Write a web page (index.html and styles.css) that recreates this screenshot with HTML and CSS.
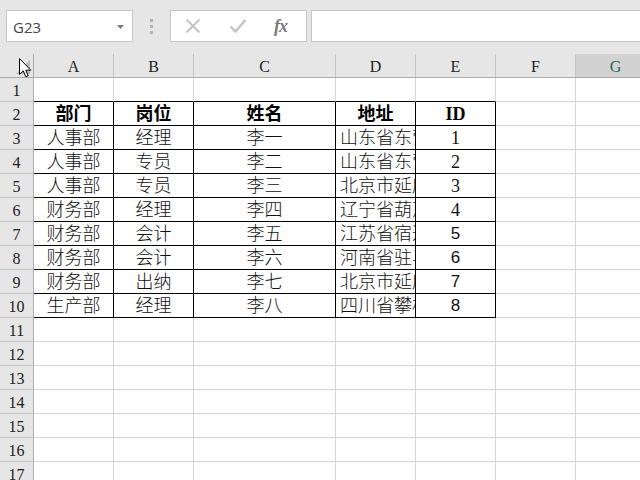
FILE: index.html
```html
<!DOCTYPE html>
<html lang="zh-CN">
<head>
<meta charset="utf-8">
<title>Sheet</title>
<link rel="stylesheet" href="styles.css">
</head>
<body>
<div class="app">
  <div class="toolbar">
    <div class="namebox">
      <span class="namebox-text">G23</span>
      <svg class="dd" width="7" height="4" viewBox="0 0 7 4"><path d="M0 0H7L3.5 4Z" fill="#7a7a7a"/></svg>
    </div>
    <div class="grip"><i></i><i></i><i></i></div>
    <div class="fbtns">
      <svg class="ico" width="16" height="16" viewBox="0 0 16 16"><path d="M1.5 1.5L14.5 14.5M14.5 1.5L1.5 14.5" stroke="#c2c2c2" stroke-width="1.8" fill="none"/></svg>
      <svg class="ico" width="18" height="16" viewBox="0 0 18 16"><path d="M1.5 8.5L6.5 13.5L16.5 2" stroke="#c2c2c2" stroke-width="2.4" fill="none"/></svg>
      <span class="fx">fx</span>
    </div>
    <div class="finput"></div>
  </div>

  <div class="sheet">
    <div class="corner"><span class="tri"></span></div>
    <div class="ch">A</div><div class="ch">B</div><div class="ch">C</div><div class="ch">D</div><div class="ch">E</div><div class="ch">F</div><div class="ch sel">G</div>

    <div class="rh">1</div><div class="c tb"></div><div class="c tb"></div><div class="c tb"></div><div class="c tb"></div><div class="c tb"></div><div class="c"></div><div class="c"></div>

    <div class="rh">2</div><div class="c t hd">部门</div><div class="c t hd">岗位</div><div class="c t hd">姓名</div><div class="c t hd">地址</div><div class="c t hd">ID</div><div class="c"></div><div class="c"></div>
    <div class="rh">3</div><div class="c t">人事部</div><div class="c t">经理</div><div class="c t">李一</div><div class="c t addr">山东省东营市</div><div class="c t">1</div><div class="c"></div><div class="c"></div>
    <div class="rh">4</div><div class="c t">人事部</div><div class="c t">专员</div><div class="c t">李二</div><div class="c t addr">山东省东营市</div><div class="c t">2</div><div class="c"></div><div class="c"></div>
    <div class="rh">5</div><div class="c t">人事部</div><div class="c t">专员</div><div class="c t">李三</div><div class="c t addr">北京市延庆区</div><div class="c t">3</div><div class="c"></div><div class="c"></div>
    <div class="rh">6</div><div class="c t">财务部</div><div class="c t">经理</div><div class="c t">李四</div><div class="c t addr">辽宁省葫芦岛</div><div class="c t">4</div><div class="c"></div><div class="c"></div>
    <div class="rh">7</div><div class="c t">财务部</div><div class="c t">会计</div><div class="c t">李五</div><div class="c t addr">江苏省宿迁市</div><div class="c t num">5</div><div class="c"></div><div class="c"></div>
    <div class="rh">8</div><div class="c t">财务部</div><div class="c t">会计</div><div class="c t">李六</div><div class="c t addr">河南省驻马店</div><div class="c t num">6</div><div class="c"></div><div class="c"></div>
    <div class="rh">9</div><div class="c t">财务部</div><div class="c t">出纳</div><div class="c t">李七</div><div class="c t addr">北京市延庆区</div><div class="c t num">7</div><div class="c"></div><div class="c"></div>
    <div class="rh">10</div><div class="c t">生产部</div><div class="c t">经理</div><div class="c t">李八</div><div class="c t addr">四川省攀枝花</div><div class="c t num">8</div><div class="c"></div><div class="c"></div>

    <div class="rh">11</div><div class="c"></div><div class="c"></div><div class="c"></div><div class="c"></div><div class="c"></div><div class="c"></div><div class="c"></div>
    <div class="rh">12</div><div class="c"></div><div class="c"></div><div class="c"></div><div class="c"></div><div class="c"></div><div class="c"></div><div class="c"></div>
    <div class="rh">13</div><div class="c"></div><div class="c"></div><div class="c"></div><div class="c"></div><div class="c"></div><div class="c"></div><div class="c"></div>
    <div class="rh">14</div><div class="c"></div><div class="c"></div><div class="c"></div><div class="c"></div><div class="c"></div><div class="c"></div><div class="c"></div>
    <div class="rh">15</div><div class="c"></div><div class="c"></div><div class="c"></div><div class="c"></div><div class="c"></div><div class="c"></div><div class="c"></div>
    <div class="rh">16</div><div class="c"></div><div class="c"></div><div class="c"></div><div class="c"></div><div class="c"></div><div class="c"></div><div class="c"></div>
    <div class="rh">17</div><div class="c"></div><div class="c"></div><div class="c"></div><div class="c"></div><div class="c"></div><div class="c"></div><div class="c"></div>
  </div>

  <svg class="cursor" width="13" height="20" viewBox="0 0 13 20"><path d="M0.5 0.5V16.5L4.3 12.9L6.8 18.8L9.2 17.8L6.8 12.2H11.8Z" fill="#fff" stroke="#000" stroke-width="1" stroke-linejoin="round"/></svg>
</div>
</body>
</html>
```

FILE: styles.css
```css
* { box-sizing: border-box; }
html, body { margin: 0; padding: 0; }
body {
  width: 640px;
  height: 480px;
  overflow: hidden;
  background: #e6e6e6;
  font-family: "Liberation Serif", "Noto Sans CJK SC", serif;
}
.app {
  position: relative;
  width: 640px;
  height: 480px;
  overflow: hidden;
}

/* toolbar */
.toolbar {
  height: 54px;
  padding: 10px 0 0 6px;
  display: flex;
  align-items: flex-start;
}
.namebox {
  width: 127px;
  height: 32px;
  background: #fff;
  border: 1px solid #c6c6c6;
  display: flex;
  align-items: center;
  justify-content: space-between;
  padding: 0 8px 0 6px;
}
.namebox-text {
  font-family: "Open Sans", "Liberation Sans", sans-serif;
  font-size: 15px;
  color: #444;
  padding-top: 1px;
}
.dd { margin-top: 1px; }
.grip {
  width: 37px;
  height: 32px;
  display: flex;
  flex-direction: column;
  align-items: center;
  justify-content: center;
  gap: 3px;
}
.grip i {
  display: block;
  width: 3px;
  height: 3px;
  background: #b3b3b3;
}
.fbtns {
  width: 137px;
  height: 32px;
  background: #fff;
  border: 1px solid #c6c6c6;
  display: flex;
  align-items: center;
  padding-left: 14px;
}
.fbtns .ico:nth-child(1) { margin-right: 28px; }
.fbtns .ico:nth-child(2) { margin-right: 27px; }
.fx {
  font-family: "Liberation Serif", serif;
  font-style: italic;
  font-weight: bold;
  font-size: 18px;
  color: #7b7b7b;
  letter-spacing: -1px;
}
.finput {
  margin-left: 4px;
  flex: 1;
  height: 32px;
  background: #fff;
  border: 1px solid #c6c6c6;
  border-right: none;
}

/* sheet grid */
.sheet {
  display: grid;
  grid-template-columns: 34px 80px 80px 142px 80px 80px 80px 80px;
  grid-template-rows: 24px;
  grid-auto-rows: 24px;
  background: #fff;
}
.corner {
  position: relative;
  background: #e6e6e6;
  border-right: 1px solid #ababab;
  border-bottom: 1px solid #ababab;
}
.tri {
  position: absolute;
  right: 3px;
  bottom: 3px;
  width: 0;
  height: 0;
  border-left: 14px solid transparent;
  border-bottom: 14px solid #b7b7b7;
}
.ch {
  background: #e6e6e6;
  border-right: 1px solid #c3c3c3;
  border-bottom: 1px solid #ababab;
  text-align: center;
  font-size: 16px;
  line-height: 24px;
  padding-top: 1px;
  color: #222;
}
.ch.sel {
  background: #d2d2d2;
  color: #1f6b5c;
}
.rh {
  background: #e6e6e6;
  border-right: 1px solid #ababab;
  border-bottom: 1px solid #c3c3c3;
  text-align: center;
  font-size: 16px;
  line-height: 24px;
  padding-top: 1px;
  color: #222;
}
.c {
  border-right: 1px solid #d4d4d4;
  border-bottom: 1px solid #d4d4d4;
  font-size: 18px;
  font-weight: 300;
  line-height: 24px;
  color: #111;
  text-align: center;
  white-space: nowrap;
  overflow: hidden;
}
.c.tb { border-bottom-color: #000; }
.c.t {
  border-right-color: #000;
  border-bottom-color: #000;
}
.c.hd { font-weight: bold; color: #000; }
.c.addr {
  text-align: left;
  padding-left: 4px;
  text-overflow: clip;
}
.c.num {
  font-family: "Liberation Sans", sans-serif;
  font-size: 17px;
}

/* mouse pointer over the select-all corner */
.cursor {
  position: absolute;
  left: 19px;
  top: 58px;
}
```
